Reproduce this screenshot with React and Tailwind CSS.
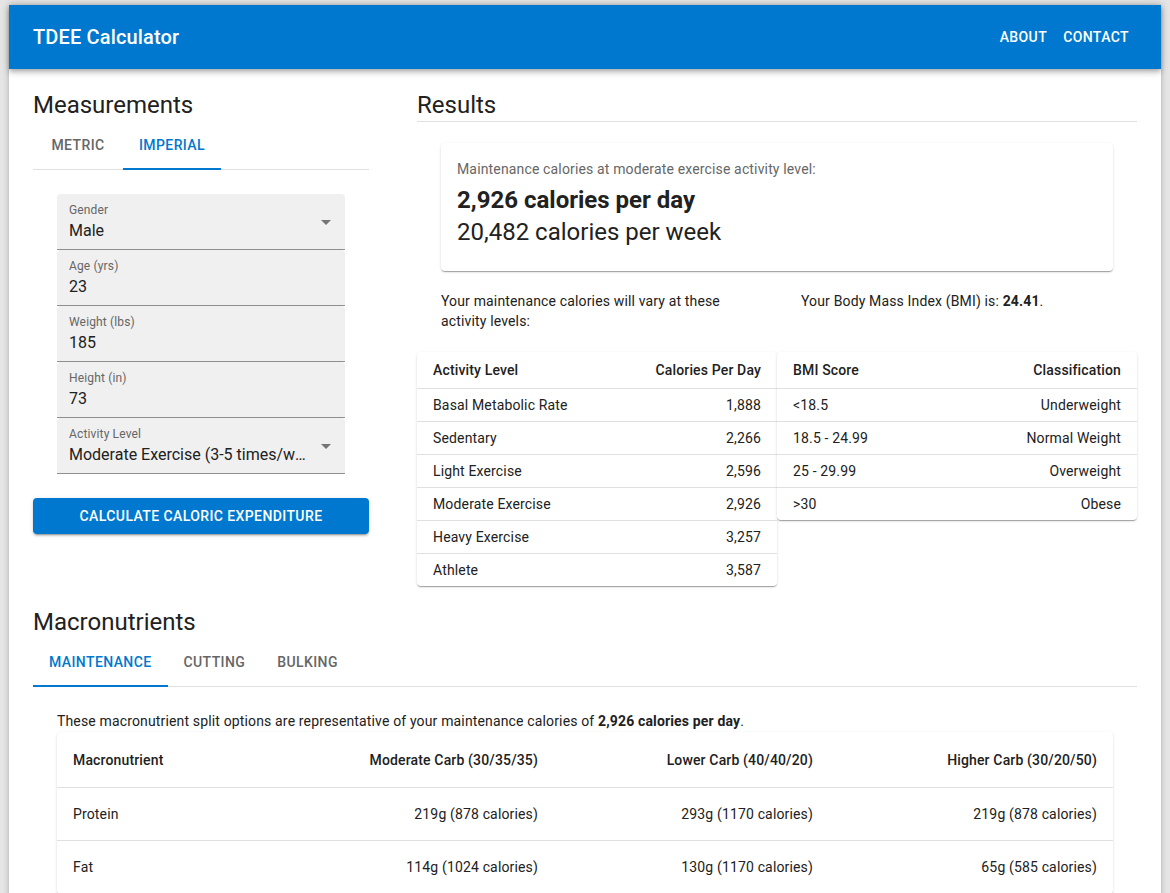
import { useState } from 'react'

const blue = 'bg-[#0078cf]'
const paperShadow = 'shadow-[0px_2px_1px_-1px_rgba(0,0,0,0.2),0px_1px_1px_0px_rgba(0,0,0,0.14),0px_1px_3px_0px_rgba(0,0,0,0.12)]'

const activity = [
    ['Basal Metabolic Rate', '1,888'],
    ['Sedentary', '2,266'],
    ['Light Exercise', '2,596'],
    ['Moderate Exercise', '2,926'],
    ['Heavy Exercise', '3,257'],
    ['Athlete', '3,587'],
]

const bmi = [
    ['<18.5', 'Underweight'],
    ['18.5 - 24.99', 'Normal Weight'],
    ['25 - 29.99', 'Overweight'],
    ['>30', 'Obese'],
]

const macros = [
    ['Protein', '219g (878 calories)', '293g (1170 calories)', '219g (878 calories)'],
    ['Fat', '114g (1024 calories)', '130g (1170 calories)', '65g (585 calories)'],
]

function Arrow() {
    return (
        <svg viewBox="0 0 24 24" className="absolute right-[7px] top-[16px] w-6 h-6 fill-[#757575]">
            <path d="M7 10l5 5 5-5z" />
        </svg>
    )
}

function Field({ label, value, select }) {
    return (
        <div className="relative h-[56px] box-border bg-[#f0f0f0] rounded-t-[4px] border-b border-[#8f8f8f] px-3 pt-2">
            <div className="text-xs leading-4 text-[#666] tracking-[0.15px]">{label}</div>
            <div className={`mt-px text-base leading-[23px] text-[#212121] truncate ${select ? 'pr-6' : ''}`}>{value}</div>
            {select && <Arrow />}
        </div>
    )
}

function Tabs({ items, active }) {
    return (
        <div className="flex h-[49px] border-b border-[#e0e0e0]">
            {items.map((t, i) => (
                <div
                    key={t}
                    className={`relative h-[48px] min-w-[90px] px-4 flex items-center justify-center text-sm font-medium tracking-[0.4px] uppercase ${i === active ? 'text-[#0078cf]' : 'text-[#666]'}`}
                >
                    {t}
                    {i === active && <div className="absolute left-0 right-0 bottom-[-1px] h-[2px] bg-[#0078cf]" />}
                </div>
            ))}
        </div>
    )
}

function SmallTable({ head, rows }) {
    return (
        <div className={`bg-white rounded-[4px] ${paperShadow} text-sm tracking-[0.15px] text-[#212121]`}>
            <div className="flex items-center justify-between h-[37px] px-4 border-b border-[#e0e0e0] font-medium">
                <span>{head[0]}</span>
                <span>{head[1]}</span>
            </div>
            {rows.map((r, i) => (
                <div key={r[0]} className={`flex items-center justify-between px-4 ${i < rows.length - 1 ? 'h-[33px] border-b border-[#e0e0e0]' : 'h-[32px]'}`}>
                    <span>{r[0]}</span>
                    <span>{r[1]}</span>
                </div>
            ))}
        </div>
    )
}

export default function App() {
    const [unit, setUnit] = useState(1)

    return (
        <div className="min-h-screen bg-[#e5e5e5] pt-[5px] px-[9px] font-['Roboto',sans-serif]">
            <div className="bg-white min-h-[900px] shadow-[0_0_6px_rgba(0,0,0,0.25)]">
                <header className={`${blue} h-16 flex items-center justify-between pl-6 pr-6 text-white shadow-[0px_2px_4px_-1px_rgba(0,0,0,0.2),0px_4px_5px_0px_rgba(0,0,0,0.14),0px_1px_10px_0px_rgba(0,0,0,0.12)]`}>
                    <h1 className="text-xl font-medium tracking-[0.15px]">TDEE Calculator</h1>
                    <nav className="flex">
                        <button className="px-2 py-1.5 text-sm font-medium tracking-[0.4px]">ABOUT</button>
                        <button className="px-2 py-1.5 text-sm font-medium tracking-[0.4px]">CONTACT</button>
                    </nav>
                </header>

                <main className="px-6 pt-5 pb-10">
                    <div className="flex gap-12">
                        <section className="w-[336px] shrink-0">
                            <h2 className="text-2xl leading-8 text-[#212121]">Measurements</h2>
                            <div onClick={() => setUnit(unit ? 0 : 1)}>
                                <Tabs items={['Metric', 'Imperial']} active={unit} />
                            </div>
                            <div className="px-6 pt-6">
                                <Field label="Gender" value="Male" select />
                                <Field label="Age (yrs)" value="23" />
                                <Field label="Weight (lbs)" value="185" />
                                <Field label="Height (in)" value="73" />
                                <Field label="Activity Level" value="Moderate Exercise (3-5 times/week)" select />
                            </div>
                            <button className={`mt-6 w-full h-9 rounded-[4px] ${blue} text-white text-sm font-medium tracking-[0.4px] uppercase shadow-[0px_3px_1px_-2px_rgba(0,0,0,0.2),0px_2px_2px_0px_rgba(0,0,0,0.14),0px_1px_5px_0px_rgba(0,0,0,0.12)]`}>
                                Calculate Caloric Expenditure
                            </button>
                        </section>

                        <section className="flex-1">
                            <h2 className="text-2xl leading-8 text-[#212121] border-b border-[#e0e0e0]">Results</h2>
                            <div className={`mx-6 mt-[21px] bg-white rounded-[4px] ${paperShadow} px-4 pt-4 pb-[23px]`}>
                                <p className="text-sm leading-5 tracking-[0.15px] text-[#666]">Maintenance calories at moderate exercise activity level:</p>
                                <p className="mt-[5px] text-2xl leading-8 font-bold text-[#212121]">2,926 calories per day</p>
                                <p className="text-2xl leading-8 text-[#212121]">20,482 calories per week</p>
                            </div>
                            <div className="mt-5 grid grid-cols-2">
                                <div>
                                    <p className="h-[40px] px-6 text-sm leading-5 tracking-[0.15px] text-[#212121]">Your maintenance calories will vary at these activity levels:</p>
                                    <div className="mt-[21px]">
                                        <SmallTable head={['Activity Level', 'Calories Per Day']} rows={activity} />
                                    </div>
                                </div>
                                <div>
                                    <p className="h-[40px] px-6 text-sm leading-5 tracking-[0.15px] text-[#212121]">
                                        Your Body Mass Index (BMI) is: <b className="font-bold">24.41</b>.
                                    </p>
                                    <div className="mt-[21px]">
                                        <SmallTable head={['BMI Score', 'Classification']} rows={bmi} />
                                    </div>
                                </div>
                            </div>
                        </section>
                    </div>

                    <section className="mt-5">
                        <h2 className="text-2xl leading-8 text-[#212121]">Macronutrients</h2>
                        <Tabs items={['Maintenance', 'Cutting', 'Bulking']} active={0} />
                        <div className="px-6 pt-6">
                            <p className="text-sm leading-5 tracking-[0.15px] text-[#212121]">
                                These macronutrient split options are representative of your maintenance calories of <b className="font-bold">2,926 calories per day</b>.
                            </p>
                            <div className={`mt-px bg-white rounded-[4px] ${paperShadow} text-sm tracking-[0.15px] text-[#212121]`}>
                                <div className="grid grid-cols-[222px_275px_275px_1fr] h-[56px] items-center border-b border-[#e0e0e0] font-medium">
                                    <span className="px-4">Macronutrient</span>
                                    <span className="px-4 text-right">Moderate Carb (30/35/35)</span>
                                    <span className="px-4 text-right">Lower Carb (40/40/20)</span>
                                    <span className="px-4 text-right">Higher Carb (30/20/50)</span>
                                </div>
                                {macros.map(m => (
                                    <div key={m[0]} className="grid grid-cols-[222px_275px_275px_1fr] h-[53px] items-center border-b border-[#e0e0e0]">
                                        <span className="px-4">{m[0]}</span>
                                        <span className="px-4 text-right">{m[1]}</span>
                                        <span className="px-4 text-right">{m[2]}</span>
                                        <span className="px-4 text-right">{m[3]}</span>
                                    </div>
                                ))}
                            </div>
                        </div>
                    </section>
                </main>
            </div>
        </div>
    )
}
